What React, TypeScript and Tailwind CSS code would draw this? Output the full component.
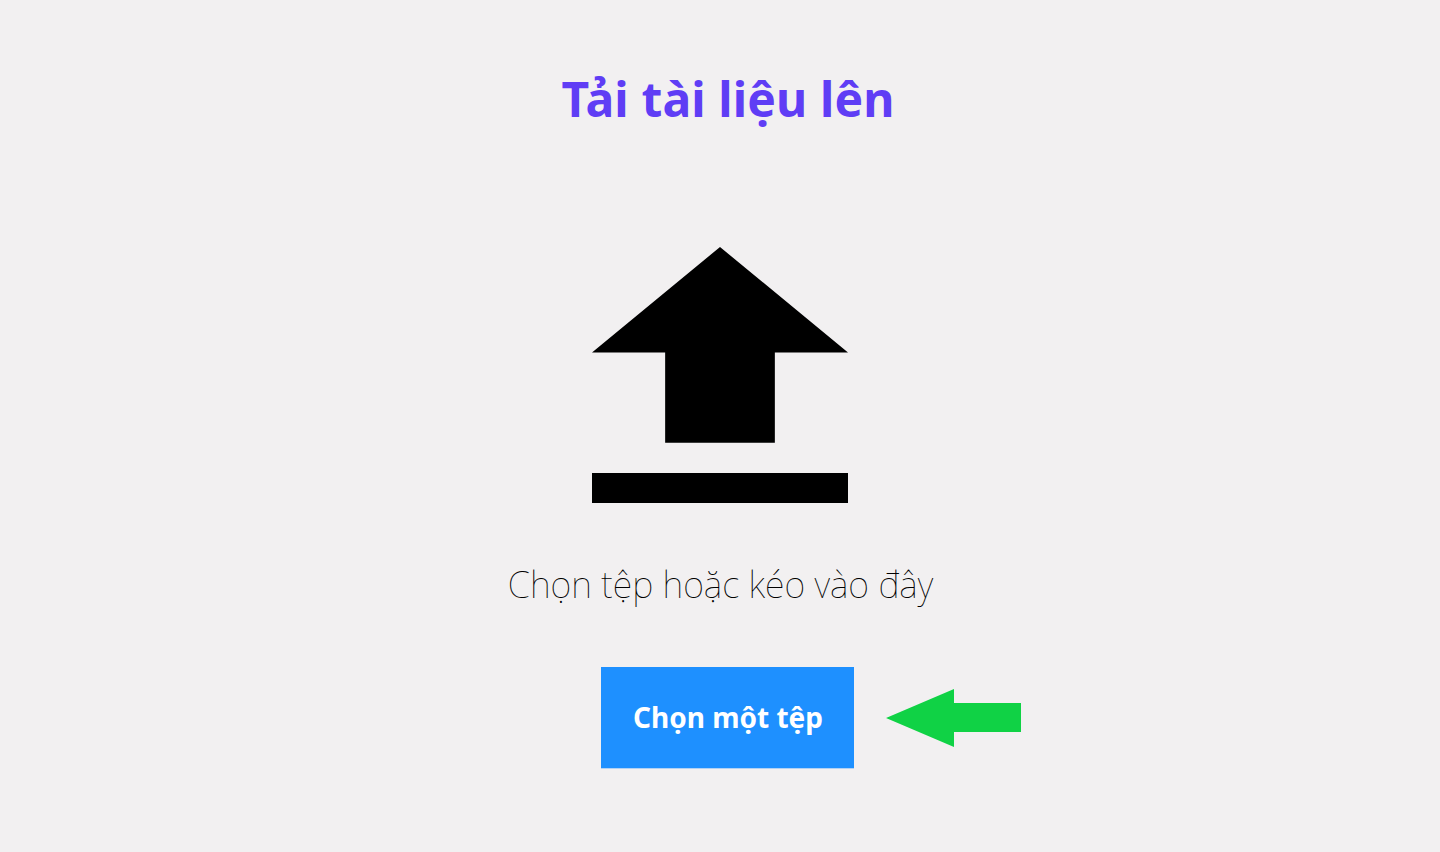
export default function App() {
  return (
    <main className="flex h-[852px] w-[1440px] flex-col items-center overflow-hidden bg-[#f2f0f1]">
      <h1 className="mt-[65px] ml-[16px] h-[68px] whitespace-nowrap font-['Noto_Sans',sans-serif] text-[48px] leading-[68px] font-bold tracking-[0.13px] text-[#5f3df5]">
        Tải tài liệu lên
      </h1>
      <svg className="mt-[114px] h-64 w-64 shrink-0" viewBox="0 0 256 256" fill="#000" aria-hidden="true">
        <path d="M128 0 256 105.4H182.85V195.8H73.15V105.4H0Z" />
        <path d="M0 225.9H256V256H0Z" />
      </svg>
      <p className="mt-[56px] ml-px h-[52px] whitespace-nowrap font-['Noto_Sans',sans-serif] text-[36px] leading-[52px] font-thin text-black">
        Chọn tệp hoặc kéo vào đây
      </p>
      <div className="mt-[56px] ml-[182px] flex items-start gap-8">
        <button className="h-[102px] w-[253px] border-b border-[#1e90ff]/30 bg-[#1e90ff] bg-clip-padding pb-px pl-px whitespace-nowrap font-['Noto_Sans',sans-serif] text-[28px] font-bold text-white">
          Chọn một tệp
        </button>
        <svg className="mt-[22px] h-[58px] w-[135px]" viewBox="0 0 135 58" fill="#10d245" aria-hidden="true">
          <path d="M0 29 68 0V14H135V43H68V58Z" />
        </svg>
      </div>
    </main>
  );
}
